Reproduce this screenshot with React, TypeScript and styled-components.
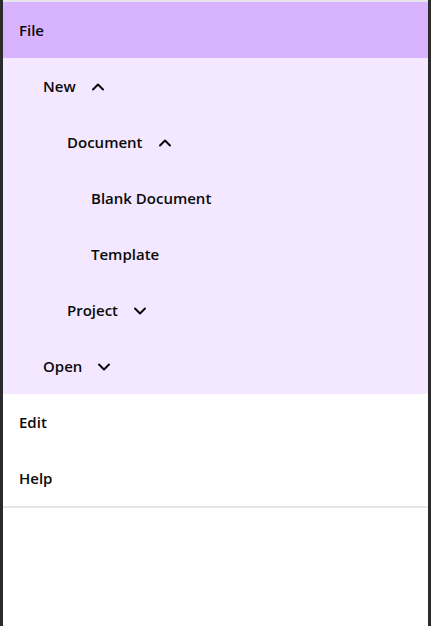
import { createGlobalStyle } from "styled-components";
import styled from "styled-components";

const GlobalStyle = createGlobalStyle`
  html, body {
    margin: 0;
    padding: 0;
    background: #2b2b2b;
    height: 100%;
  }
  #root {
    height: 100%;
  }
`;

type Node = {
  label: string;
  open?: boolean;
  children?: Node[];
};

const menu: Node[] = [
  {
    label: "File",
    open: true,
    children: [
      {
        label: "New",
        open: true,
        children: [
          {
            label: "Document",
            open: true,
            children: [{ label: "Blank Document" }, { label: "Template" }],
          },
          { label: "Project", open: false, children: [] },
        ],
      },
      { label: "Open", open: false, children: [] },
    ],
  },
  { label: "Edit" },
  { label: "Help" },
];

const Page = styled.div`
  margin: 0 3px;
  height: 100%;
  background: #fff;
  font-family: "Open Sans", "Noto Sans", sans-serif;
`;

const Nav = styled.nav`
  border-top: 2px solid #e5e5ea;
  border-bottom: 2px solid #e5e5ea;
`;

const Row = styled.div<{ $depth: number; $tone: "top" | "sub" | "plain" }>`
  display: flex;
  align-items: center;
  height: 56px;
  padding-left: ${(p) => 16 + p.$depth * 24}px;
  background: ${(p) =>
    p.$tone === "top" ? "#d8b4fe" : p.$tone === "sub" ? "#f3e8ff" : "#fff"};
  color: #0a0a0a;
  font-size: 15px;
  font-weight: 600;
  cursor: pointer;
`;

const Caret = styled.span`
  display: inline-flex;
  margin-left: 12px;
  margin-top: 1px;
`;

const Chevron = ({ up }: { up: boolean }) => (
  <svg width="20" height="20" viewBox="0 0 24 24" fill="none" stroke="#0a0a0a" strokeWidth="2.4" strokeLinecap="round" strokeLinejoin="round">
    <path d={up ? "M6 15l6-6 6 6" : "M6 9l6 6 6-6"} />
  </svg>
);

const renderNode = (node: Node, depth: number, inOpen: boolean): JSX.Element[] => {
  const tone = depth === 0 ? (node.open ? "top" : "plain") : inOpen ? "sub" : "plain";
  const hasKids = !!node.children;
  const rows = [
    <Row key={node.label + depth} $depth={depth} $tone={tone}>
      {node.label}
      {hasKids && depth > 0 && (
        <Caret>
          <Chevron up={!!node.open} />
        </Caret>
      )}
    </Row>,
  ];
  if (node.open && node.children) {
    node.children.forEach((c) => rows.push(...renderNode(c, depth + 1, true)));
  }
  return rows;
};

export default function App() {
  return (
    <>
      <GlobalStyle />
      <Page>
        <Nav>{menu.flatMap((n) => renderNode(n, 0, false))}</Nav>
      </Page>
    </>
  );
}
